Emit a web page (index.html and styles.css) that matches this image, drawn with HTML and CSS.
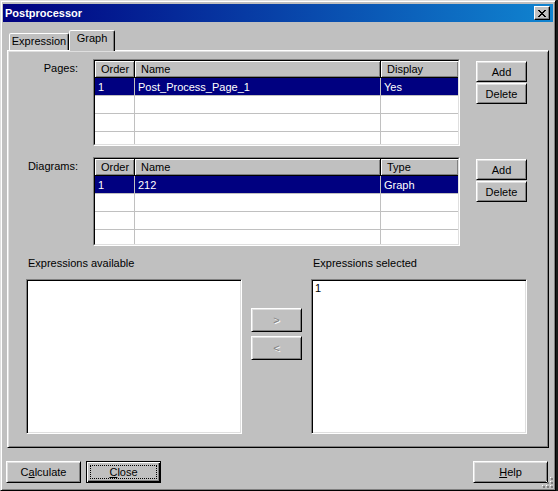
FILE: index.html
```html
<!DOCTYPE html>
<html lang="en">
<head>
  <meta charset="UTF-8" />
  <title>Postprocessor</title>
  <link rel="stylesheet" href="styles.css">
</head>
<body>
  <div class="window">
    <div class="titlebar">
      <span class="title">Postprocessor</span>
      <button class="title-close">
        <svg width="8" height="7" viewBox="0 0 8 7" shape-rendering="crispEdges">
          <path d="M0 0h2v1h-2z M6 0h2v1h-2z M1 1h2v1h-2z M5 1h2v1h-2z M2 2h4v1h-4z M3 3h2v1h-2z M2 4h4v1h-4z M1 5h2v1h-2z M5 5h2v1h-2z M0 6h2v1h-2z M6 6h2v1h-2z" fill="#000"/>
        </svg>
      </button>
    </div>

    <div class="dialog">
      <div class="tabs">
        <div class="tab">Expression</div>
        <div class="tab active">Graph</div>
      </div>

      <div class="panel">
        <div class="list-row">
          <div class="field-label">Pages:</div>
          <div class="grid-box">
            <div class="grid-inner">
              <table class="grid">
                <colgroup><col class="c-order"><col class="c-name"><col class="c-last"></colgroup>
                <thead>
                  <tr><th>Order</th><th>Name</th><th>Display</th></tr>
                </thead>
                <tbody>
                  <tr class="selected"><td>1</td><td>Post_Process_Page_1</td><td>Yes</td></tr>
                  <tr><td></td><td></td><td></td></tr>
                  <tr><td></td><td></td><td></td></tr>
                  <tr><td></td><td></td><td></td></tr>
                </tbody>
              </table>
            </div>
          </div>
          <div class="side-buttons">
            <button class="btn">Add</button>
            <button class="btn">Delete</button>
          </div>
        </div>

        <div class="list-row diagrams">
          <div class="field-label">Diagrams:</div>
          <div class="grid-box tall">
            <div class="grid-inner">
              <table class="grid">
                <colgroup><col class="c-order"><col class="c-name"><col class="c-last"></colgroup>
                <thead>
                  <tr><th>Order</th><th>Name</th><th>Type</th></tr>
                </thead>
                <tbody>
                  <tr class="selected"><td>1</td><td>212</td><td>Graph</td></tr>
                  <tr><td></td><td></td><td></td></tr>
                  <tr><td></td><td></td><td></td></tr>
                  <tr><td></td><td></td><td></td></tr>
                </tbody>
              </table>
            </div>
          </div>
          <div class="side-buttons">
            <button class="btn">Add</button>
            <button class="btn">Delete</button>
          </div>
        </div>

        <div class="expr-row">
          <div class="expr-col">
            <div class="expr-label">Expressions available</div>
            <div class="listbox"></div>
          </div>
          <div class="move-buttons">
            <button class="btn move" disabled>&gt;</button>
            <button class="btn move" disabled>&lt;</button>
          </div>
          <div class="expr-col">
            <div class="expr-label">Expressions selected</div>
            <div class="listbox"><div class="list-item">1</div></div>
          </div>
        </div>
      </div>

      <div class="footer">
        <div class="footer-left">
          <button class="btn wide">C<u>a</u>lculate</button>
          <button class="btn wide default"><span class="focus"><u>C</u>lose</span></button>
        </div>
        <button class="btn wide"><u>H</u>elp</button>
      </div>
    </div>

    <svg class="grip" width="11" height="11" viewBox="0 0 11 11" shape-rendering="crispEdges">
      <g fill="#fff">
        <rect x="8" y="0" width="1" height="1"/>
        <rect x="4" y="4" width="1" height="1"/><rect x="8" y="4" width="1" height="1"/>
        <rect x="0" y="8" width="1" height="1"/><rect x="4" y="8" width="1" height="1"/><rect x="8" y="8" width="1" height="1"/>
      </g>
      <g fill="#808080">
        <rect x="9" y="1" width="2" height="2"/>
        <rect x="5" y="5" width="2" height="2"/><rect x="9" y="5" width="2" height="2"/>
        <rect x="1" y="9" width="2" height="2"/><rect x="5" y="9" width="2" height="2"/><rect x="9" y="9" width="2" height="2"/>
      </g>
    </svg>
  </div>
</body>
</html>
```

FILE: styles.css
```css
:root {
  --face: #c0c0c0;
  --light: #dfdfdf;
  --shadow: #808080;
  --select: #000080;
}

* {
  box-sizing: border-box;
}

html, body {
  margin: 0;
  padding: 0;
}

body {
  width: 558px;
  height: 491px;
  overflow: hidden;
  background: #1a1a1a;
  font-family: 'Liberation Sans', Arial, sans-serif;
  font-size: 11px;
  color: #000;
}

.window {
  position: relative;
  width: 556px;
  height: 491px;
  background: var(--face);
  border: 1px solid;
  border-color: var(--light) #000 #000 var(--light);
  box-shadow: inset 1px 1px #fff, inset -1px -1px var(--shadow);
  padding: 2px 2px 2px 2px;
}

.titlebar {
  height: 18px;
  margin-top: 1px;
  display: flex;
  align-items: center;
  justify-content: space-between;
  padding-left: 2px;
  background: linear-gradient(to right, #000080, #1084d0);
}

.title {
  color: #fff;
  font-weight: bold;
  font-size: 11px;
}

.title-close {
  width: 16px;
  height: 14px;
  margin-right: 3px;
  padding: 0;
  display: flex;
  align-items: center;
  justify-content: center;
  background: var(--face);
  border: 1px solid;
  border-color: #fff #000 #000 #fff;
  box-shadow: inset -1px -1px var(--shadow);
}

.dialog {
  padding: 8px 4px 0 4px;
}

/* tabs */
.tabs {
  height: 20px;
  display: flex;
  align-items: flex-end;
  padding-left: 2px;
}

.tab {
  width: 60px;
  height: 17px;
  padding-top: 1px;
  text-align: center;
  border: 1px solid;
  border-bottom: none;
  border-color: #fff #000 transparent #fff;
  border-radius: 2px 2px 0 0;
  box-shadow: inset -1px 0 var(--shadow);
  background: var(--face);
  white-space: nowrap;
}

.tab.active {
  position: relative;
  z-index: 1;
  width: 46px;
  height: 21px;
  margin-bottom: -1px;
}

.panel {
  height: 398px;
  padding-top: 8px;
  border: 1px solid;
  border-color: #fff #000 #000 #fff;
  box-shadow: inset 1px 1px var(--light), inset -1px -1px var(--shadow);
}

/* pages / diagrams lists */
.list-row {
  display: flex;
  align-items: flex-start;
}

.list-row.diagrams {
  margin-top: 11px;
}

.field-label {
  width: 70px;
  margin-right: 15px;
  padding-top: 3px;
  text-align: right;
  line-height: 13px;
}

.grid-box {
  width: 367px;
  height: 87px;
  border: 1px solid;
  border-color: var(--shadow) #fff #fff var(--shadow);
}

.grid-box.tall {
  height: 89px;
}

.grid-inner {
  height: 100%;
  overflow: hidden;
  background: #fff;
  border: 1px solid;
  border-color: #000 var(--light) var(--light) #000;
}

.grid {
  width: 363px;
  table-layout: fixed;
  border-collapse: separate;
  border-spacing: 0;
}

.c-order { width: 40px; }
.c-name { width: 246px; }
.c-last { width: 77px; }

.grid th {
  height: 17px;
  padding: 0 0 0 6px;
  font-weight: normal;
  text-align: left;
  background: var(--face);
  border-right: 1px solid #000;
  border-bottom: 1px solid #000;
  box-shadow: inset 1px 1px #fff, inset -1px -1px var(--shadow);
  white-space: nowrap;
}

.grid th:last-child {
  border-right: none;
}

.grid td {
  height: 18px;
  padding: 0 0 0 3px;
  border-right: 1px solid var(--face);
  border-bottom: 1px solid var(--face);
  white-space: nowrap;
}

.grid td:last-child {
  border-right: none;
}

.grid tr.selected td {
  background: var(--select);
  color: #fff;
}

.side-buttons {
  margin-left: 16px;
  margin-top: 2px;
  display: flex;
  flex-direction: column;
  gap: 1px;
}

/* buttons */
.btn {
  width: 51px;
  height: 21px;
  padding: 0;
  font-family: inherit;
  font-size: 11px;
  color: #000;
  background: var(--face);
  border: 1px solid;
  border-color: #fff #000 #000 #fff;
  box-shadow: inset 1px 1px var(--light), inset -1px -1px var(--shadow);
}

.btn.wide {
  width: 75px;
  height: 22px;
}

.btn.default {
  border-color: #000;
  box-shadow: inset 1px 1px #fff, inset -1px -1px #000, inset -2px -2px var(--shadow);
  padding: 3px;
}

.btn.default .focus {
  display: flex;
  align-items: center;
  justify-content: center;
  height: 100%;
  border: 1px dotted #000;
}

.btn.move {
  height: 24px;
  color: var(--shadow);
  text-shadow: 1px 1px #fff;
}

/* expressions */
.expr-row {
  display: flex;
  align-items: flex-start;
  margin-top: 11px;
  padding-left: 18px;
}

.expr-label {
  padding-left: 2px;
  line-height: 13px;
  margin-bottom: 9px;
}

.listbox {
  width: 216px;
  height: 155px;
  background: #fff;
  border: 1px solid;
  border-color: var(--shadow) #fff #fff var(--shadow);
  box-shadow: inset 1px 1px #000, inset -1px -1px var(--light);
  padding: 2px 3px;
}

.list-item {
  color: #000;
  line-height: 13px;
}

.move-buttons {
  margin: 51px 9px 0 9px;
  display: flex;
  flex-direction: column;
  gap: 4px;
}

/* footer */
.footer {
  margin: 13px 1px 0 -1px;
  display: flex;
  justify-content: space-between;
}

.footer-left {
  display: flex;
  gap: 5px;
}

.grip {
  position: absolute;
  right: 2px;
  bottom: 2px;
}
```
